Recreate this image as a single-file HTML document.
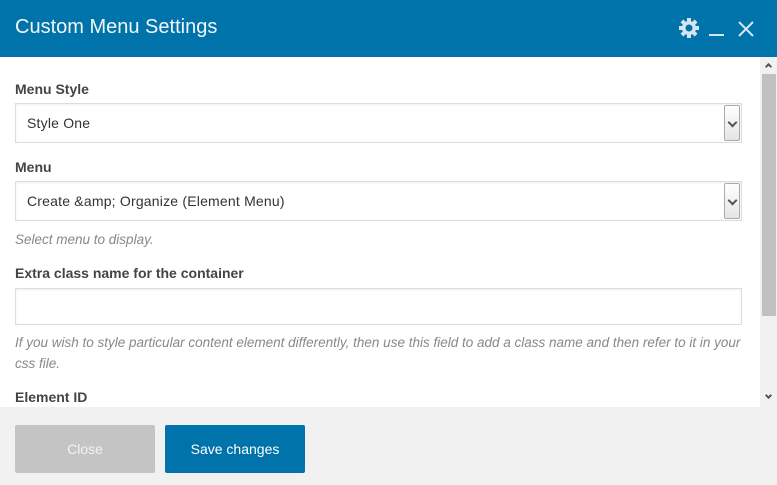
<!DOCTYPE html>
<html><head><style>
*{box-sizing:border-box;margin:0;padding:0}
body{width:777px;height:485px;overflow:hidden;font-family:"Liberation Sans",sans-serif;background:#fff;position:relative}
.hdr{position:absolute;left:0;top:0;width:777px;height:57px;background:#0073aa;color:#fff}
.hdr h1{position:absolute;left:15px;top:16px;font-size:20px;font-weight:normal;color:#f0f6fa}
.lbl{position:absolute;left:15px;font-size:14px;font-weight:bold;color:#444}
.sel{position:absolute;left:15px;width:727px;height:40px;border:1px solid #ddd;box-shadow:inset 0 1px 2px rgba(0,0,0,.07);font-size:14px;color:#333;padding:11px 11px;letter-spacing:0.2px}
.arr{position:absolute;right:1px;top:1px;width:16px;height:36px;border:1px solid #aaa;border-radius:2px;background:linear-gradient(#fff,#e5e5e5)}
.arr:after{content:"";position:absolute;left:4px;top:13px;width:5px;height:5px;border-right:2px solid #555;border-bottom:2px solid #555;transform:rotate(45deg)}
.help{position:absolute;left:15px;width:730px;font-size:13.5px;font-style:italic;color:#888;line-height:21px}
.sb{position:absolute;left:760px;top:57px;width:17px;height:350px;background:#f1f1f1}
.th{position:absolute;left:762px;top:74px;width:14px;height:242px;background:#c1c1c1}
.ftr{position:absolute;left:0;top:407px;width:777px;height:78px;background:#f1f1f1}
.btn{position:absolute;top:18px;width:140px;height:48px;font-size:14px;text-align:center;line-height:48px;border-radius:2px}
</style></head><body>
<div class="hdr"><h1>Custom Menu Settings</h1>
<svg style="position:absolute;left:679px;top:18px" width="20" height="20" viewBox="0 0 20 20"><g fill="#d5e6f0"><circle cx="10" cy="10" r="7"/><rect x="8" y="0" width="4" height="20"/><rect x="0" y="8" width="20" height="4"/><rect x="8" y="0" width="4" height="20" transform="rotate(45 10 10)"/><rect x="8" y="0" width="4" height="20" transform="rotate(-45 10 10)"/></g><circle cx="10" cy="10" r="3.5" fill="#0073aa"/></svg>
<div style="position:absolute;left:709px;top:34px;width:15px;height:2px;background:#d5e6f0"></div>
<svg style="position:absolute;left:738px;top:21px" width="16" height="16"><path d="M1 1L15 15M15 1L1 15" stroke="#d5e6f0" stroke-width="2"/></svg>
</div>
<div class="lbl" style="top:81px">Menu Style</div>
<div class="sel" style="top:103px">Style One<div class="arr"></div></div>
<div class="lbl" style="top:159px">Menu</div>
<div class="sel" style="top:181px">Create &amp;amp; Organize (Element Menu)<div class="arr"></div></div>
<div class="help" style="top:229px">Select menu to display.</div>
<div class="lbl" style="top:265px">Extra class name for the container</div>
<div class="sel" style="top:288px;height:37px"></div>
<div class="help" style="top:332px">If you wish to style particular content element differently, then use this field to add a class name and then refer to it in your css file.</div>
<div class="lbl" style="top:389px">Element ID</div>
<div class="sb"></div><div class="th"></div>
<div style="position:absolute;left:766px;top:64px;width:5px;height:5px;border-left:2px solid #555;border-top:2px solid #555;transform:rotate(45deg)"></div>
<div style="position:absolute;left:766px;top:393px;width:5px;height:5px;border-right:2px solid #555;border-bottom:2px solid #555;transform:rotate(45deg)"></div>
<div class="ftr">
<div class="btn" style="left:15px;background:#c4c4c4;color:#f3f3f3">Close</div>
<div class="btn" style="left:165px;background:#0073aa;color:#fff">Save changes</div>
</div>
</body></html>
